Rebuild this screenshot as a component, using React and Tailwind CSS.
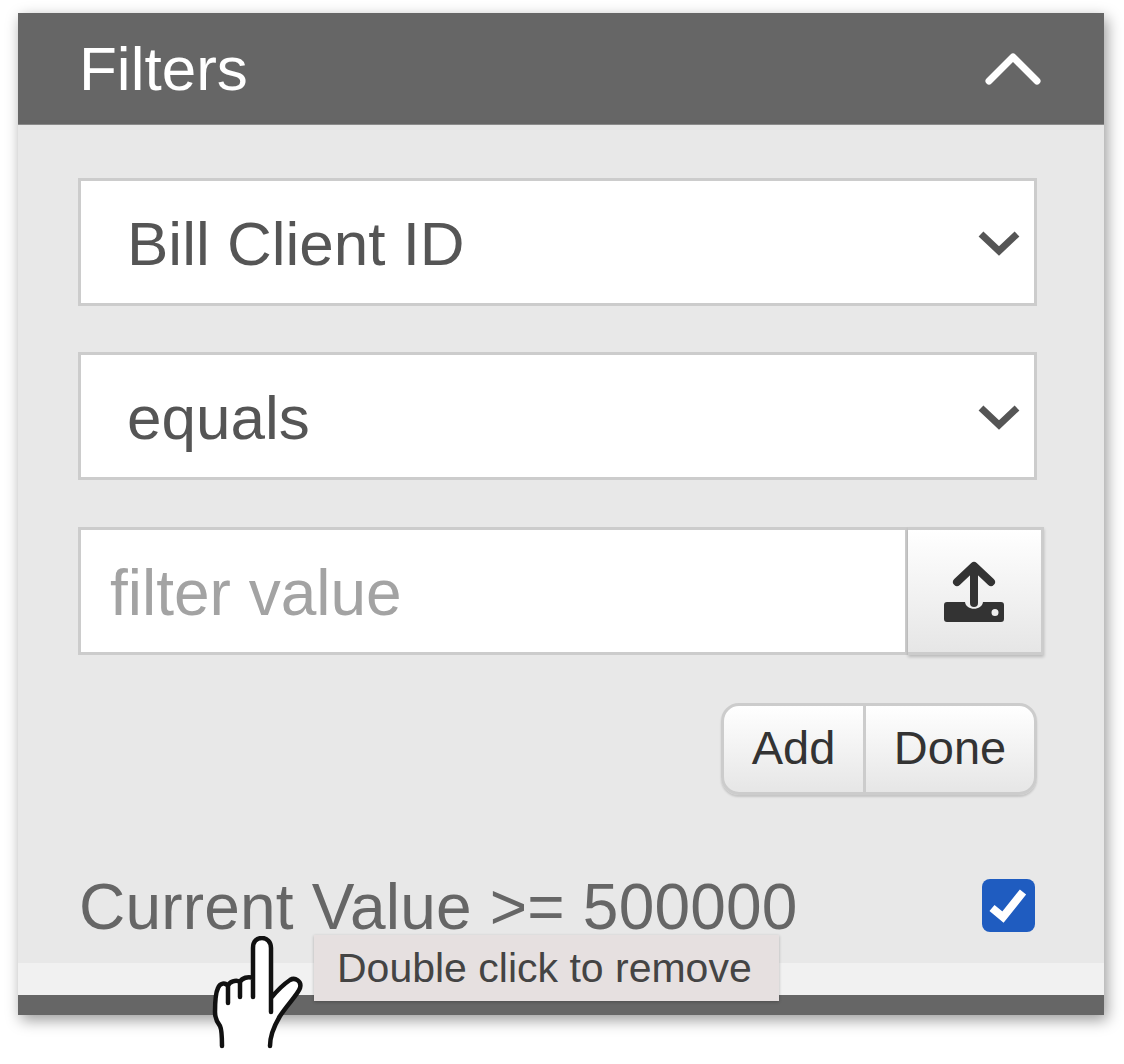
function SelectBox({ label }) {
  return (
    <div className="h-[128px] w-[959px] bg-white border-[3px] border-[#cccccc] flex items-center justify-between pl-[46px] pr-[14px]">
      <span className="text-[62px] text-[#555555] leading-none pt-[3px]">{label}</span>
      <svg width="42" height="28" viewBox="0 0 42 28" className="text-[#555555] mt-[2px]">
        <path d="M3 5 L21 22 L39 5" fill="none" stroke="currentColor" strokeWidth="7" />
      </svg>
    </div>
  );
}

function HandCursor() {
  const outline =
    "M10 110 C10 100 10 94 8 90 C4 85 3 82 3 76 C3 66 4 56 6 52 C8 47 13 46 16 50 C17 46 24 43 28 46 C30 42 36 40 41 42 L41 12 C41 5 45 2 50 2 C55 2 59 6 59 12 L59 62 C64 56 72 48 78 44 C83 41 90 45 88 52 C86 58 76 68 68 80 C62 90 58 100 58 110";
  return (
    <svg width="96" height="114" viewBox="0 0 96 114" className="absolute left-[212px] top-[936px]">
      <path d={outline} fill="#ffffff" />
      <path
        d={`${outline} M16 50 L16 67 M28 46 L28 61 M41 42 L41 61 M59 62 L59 76`}
        fill="none"
        stroke="#111111"
        strokeWidth="4.5"
        strokeLinecap="round"
      />
    </svg>
  );
}

export default function App() {
  return (
    <div className="relative w-[1124px] h-[1064px] bg-white overflow-hidden font-['Liberation_Sans',sans-serif]">
      <div className="pt-[13px] pl-[18px]">
        <div className="w-[1086px] h-[1002px] flex flex-col bg-[#e8e8e8] shadow-[3px_5px_14px_rgba(0,0,0,0.4)]">
          <div className="h-[112px] shrink-0 bg-[#666666] flex items-center justify-between pl-[61px] pr-[62px] border-b border-[#8a8a8a]">
            <span className="text-[62px] text-white leading-none">Filters</span>
            <svg width="58" height="36" viewBox="0 0 58 36">
              <path d="M5 30 L29 6 L53 30" fill="none" stroke="#ffffff" strokeWidth="7" strokeLinecap="round" strokeLinejoin="round" />
            </svg>
          </div>

          <div className="flex-1 pl-[60px] pt-[53px]">
            <div className="flex flex-col gap-[46px]">
              <SelectBox label="Bill Client ID" />
              <SelectBox label="equals" />
            </div>

            <div className="mt-[47px] flex h-[128px] w-[966px]">
              <div className="w-[830px] bg-white border-[3px] border-[#cccccc] flex items-center pl-[29px]">
                <span className="text-[64px] text-[#a3a3a3] leading-none pt-[3px]">filter value</span>
              </div>
              <div className="flex-1 border-[3px] border-l-0 border-[#cccccc] bg-gradient-to-b from-white to-[#e6e6e6] flex items-center justify-center shadow-[0_2px_3px_rgba(0,0,0,0.2)]">
                <svg width="62" height="62" viewBox="0 0 62 62" className="mt-[2px] -ml-[2px]">
                  <path d="M31 6 L31 42" stroke="#333333" strokeWidth="8" strokeLinecap="round" />
                  <path d="M14 21 L31 5 L48 21" fill="none" stroke="#333333" strokeWidth="8" strokeLinecap="round" strokeLinejoin="round" />
                  <path
                    fillRule="evenodd"
                    d="M4 41 H22 C23 50 39 50 40 41 H58 C60 41 61 42 61 44 V58 C61 60 60 61 58 61 H4 C2 61 1 60 1 58 V44 C1 42 2 41 4 41 Z M52 48 A3.5 3.5 0 1 0 52 55 A3.5 3.5 0 1 0 52 48 Z"
                    fill="#333333"
                  />
                </svg>
              </div>
            </div>

            <div className="mt-[48px] w-[959px] flex justify-end">
              <div className="flex h-[92px] w-[316px] rounded-[18px] border-[3px] border-[#cccccc] bg-gradient-to-b from-white to-[#e6e6e6] shadow-[0_2px_2px_rgba(0,0,0,0.15)] text-[#333333] text-[47px] leading-none">
                <div className="w-[142px] flex items-center justify-center border-r-[3px] border-[#cccccc] pb-[3px]">Add</div>
                <div className="flex-1 flex items-center justify-center pb-[3px]">Done</div>
              </div>
            </div>

            <div className="mt-[84px] w-[957px] h-[53px] flex items-center justify-between">
              <span className="text-[64px] text-[#666666] leading-none whitespace-nowrap ml-[1px] pt-[3px] tracking-[0.2px]">Current Value &gt;= 500000</span>
              <div className="w-[53px] h-[53px] rounded-[8px] bg-[#1f5cc0] flex items-center justify-center">
                <svg width="53" height="53" viewBox="0 0 53 53">
                  <path d="M10 29 L21 38 L41 13" fill="none" stroke="#ffffff" strokeWidth="8" />
                </svg>
              </div>
            </div>
          </div>

          <div className="h-[32px] shrink-0 bg-[#f1f1f1]" />
          <div className="h-[20px] shrink-0 bg-[#666666]" />
        </div>
      </div>

      <div className="absolute left-[314px] top-[935px] w-[465px] h-[66px] bg-[#e6e0e0] shadow-[0_1px_3px_rgba(0,0,0,0.25)] flex items-center pl-[23px] text-[41px] text-[#444444] leading-none whitespace-nowrap">
        Double click to remove
      </div>
      <HandCursor />
    </div>
  );
}
